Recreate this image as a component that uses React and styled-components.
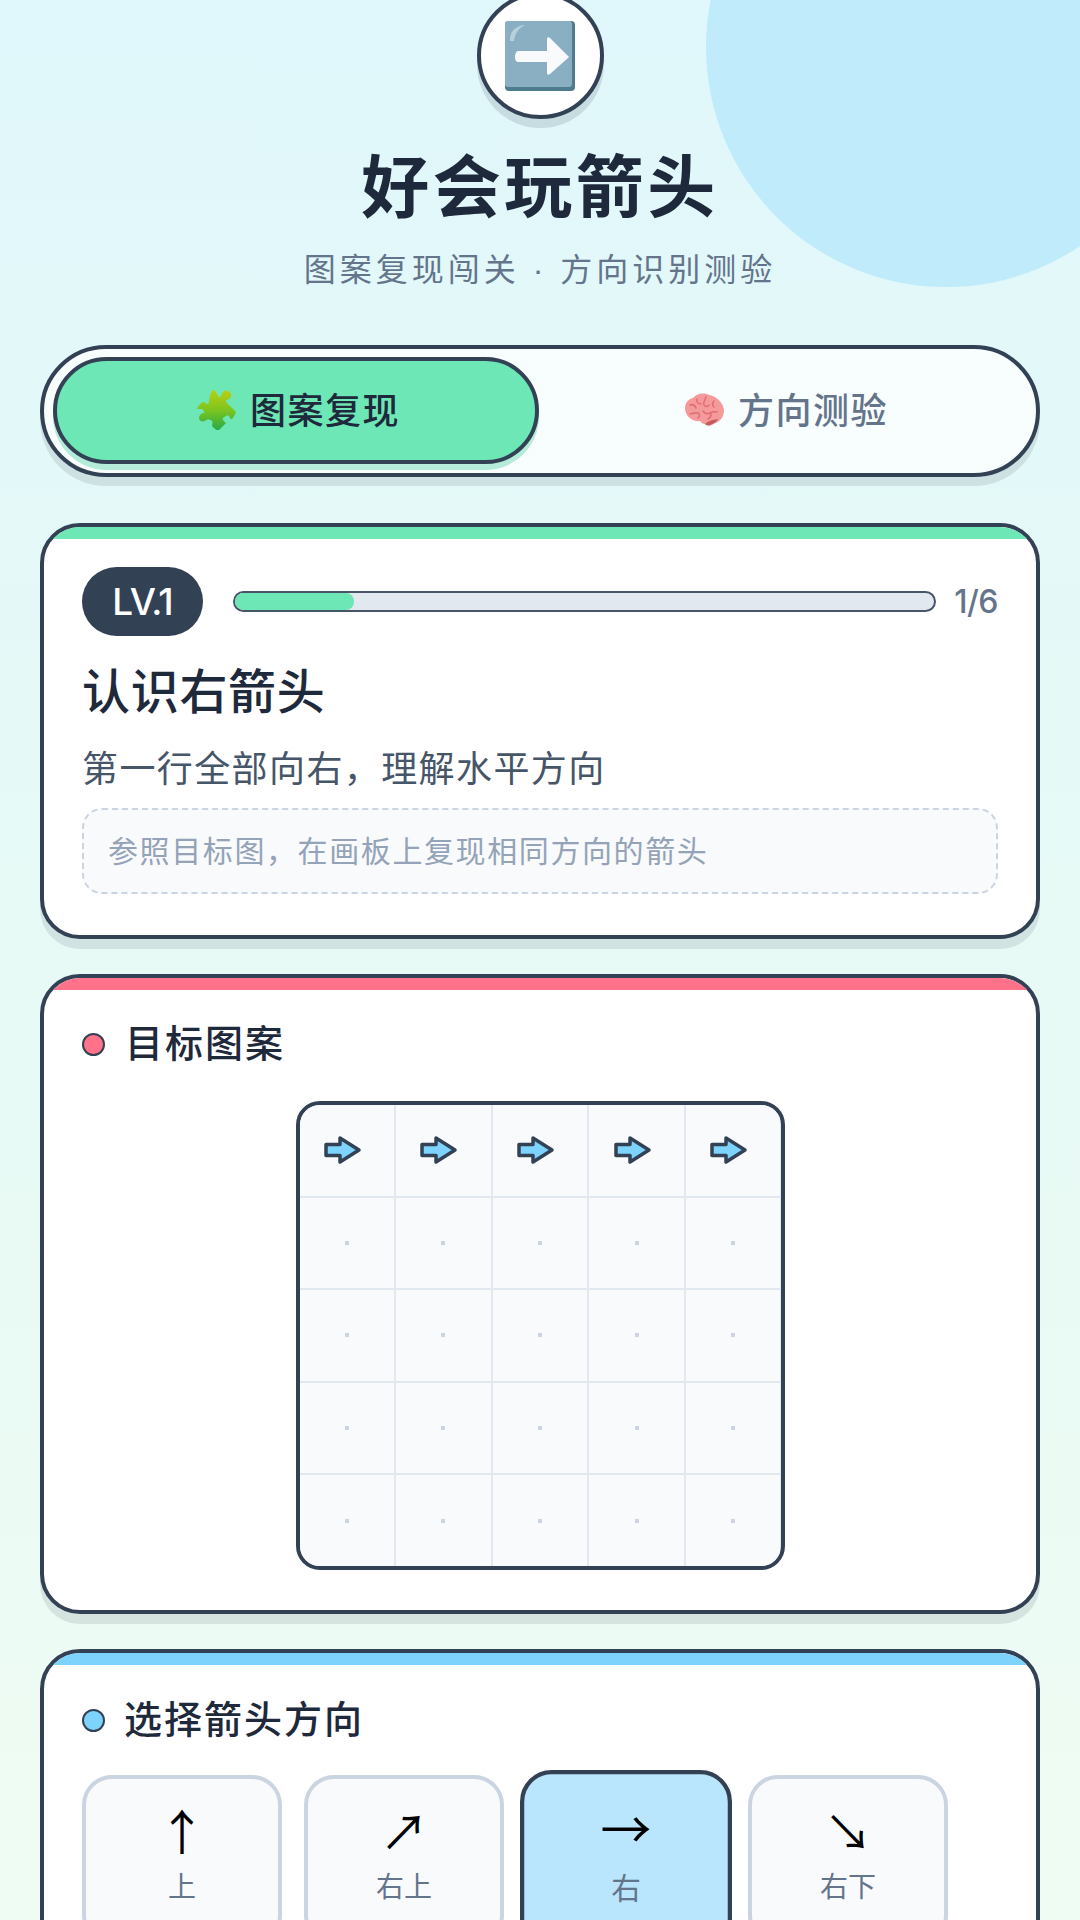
import React from 'react';
import styled, { createGlobalStyle } from 'styled-components';

const GlobalStyle = createGlobalStyle`
  html, body { margin: 0; padding: 0; }
  body { font-family: "Noto Sans CJK SC", "Noto Sans", sans-serif; color: #1e293b; }
  * { box-sizing: border-box; }
`;

const Page = styled.div`
  position: relative;
  width: 1080px;
  height: 1920px;
  overflow: hidden;
  padding: 0 40px;
  background: linear-gradient(180deg, #e0f7fb 0%, #e5f9f6 40%, #effcf3 100%);
`;

const Blob = styled.div`
  position: absolute;
  top: -193px;
  right: -106px;
  width: 480px;
  height: 480px;
  border-radius: 50%;
  background: #bfebfa;
`;

const Header = styled.header`
  position: relative;
  display: flex;
  flex-direction: column;
  align-items: center;
`;

const IconBadge = styled.div`
  width: 127px;
  height: 127px;
  margin-top: -8px;
  border: 4px solid #334155;
  border-radius: 50%;
  background: #fff;
  box-shadow: 0 9px 0 rgba(51, 65, 85, 0.15);
  display: flex;
  align-items: center;
  justify-content: center;
`;

const Title = styled.h1`
  margin: 24px 0 0;
  font-size: 68px;
  line-height: 80px;
  font-weight: 600;
  letter-spacing: 3.5px;
  color: #1e293b;
`;

const Subtitle = styled.p`
  margin: 22px 0 0;
  font-size: 32px;
  line-height: 44px;
  letter-spacing: 4px;
  color: #64748b;
`;

const Separator = styled.span`
  font-family: "Liberation Sans", sans-serif;
  line-height: 1;
`;

const Tabs = styled.div`
  position: relative;
  display: flex;
  gap: 2px;
  height: 132px;
  margin-top: 56px;
  padding: 8px 9px;
  border: 4px solid #334155;
  border-radius: 66px;
  background: rgba(255, 255, 255, 0.75);
  box-shadow: 0 9px 0 rgba(51, 65, 85, 0.12);
`;

const Tab = styled.div`
  flex: 1;
  height: 107px;
  padding: 0 0 5px 4px;
  display: flex;
  align-items: center;
  justify-content: center;
  gap: 14px;
  border-radius: 54px;
  border: 4px solid ${p => (p.$active ? '#334155' : 'transparent')};
  background: ${p => (p.$active ? '#6ee7b7' : 'transparent')};
  box-shadow: ${p => (p.$active ? '0 6px 0 #b5ecd9' : 'none')};
  color: ${p => (p.$active ? '#1e293b' : '#64748b')};
  font-size: 36px;
  font-weight: 500;
  letter-spacing: 1.5px;
`;

const TabIcon = styled.svg`
  margin-top: 3px;
`;

const Card = styled.section`
  position: relative;
  margin-top: ${p => p.$gap}px;
  border: 4px solid #334155;
  border-radius: 40px;
  background: #fff;
  box-shadow: 0 10px 0 rgba(51, 65, 85, 0.12);
  overflow: hidden;
`;

const Stripe = styled.div`
  height: 12px;
  background: ${p => p.$color};
`;

const CardBody = styled.div`
  padding: ${p => p.$top}px 38px ${p => p.$bottom}px;
`;

const LevelRow = styled.div`
  display: flex;
  align-items: center;
  gap: 30px;
`;

const Level = styled.div`
  width: 121px;
  height: 69px;
  border-radius: 35px;
  background: #334155;
  color: #fff;
  display: flex;
  align-items: center;
  justify-content: center;
  font-family: Inter, sans-serif;
  font-size: 37px;
  font-weight: 500;
  letter-spacing: -1px;
`;

const Progress = styled.div`
  flex: 1;
  height: 21px;
  border: 2.5px solid #475569;
  border-radius: 11px;
  background: #e2e8f0;
  overflow: hidden;
`;

const ProgressFill = styled.div`
  height: 100%;
  background: #6ee7b7;
  border-radius: 0 8px 8px 0;
`;

const Count = styled.div`
  margin-left: -12px;
  font-family: Inter, sans-serif;
  font-size: 32px;
  font-weight: 500;
  letter-spacing: -0.5px;
  color: #64748b;
`;

const LevelTitle = styled.h2`
  margin: 22px 0 0;
  font-size: 48px;
  line-height: 60px;
  font-weight: 500;
  letter-spacing: 0.7px;
  color: #1e293b;
`;

const LevelDesc = styled.p`
  margin: 24px 0 0;
  font-size: 36px;
  line-height: 48px;
  letter-spacing: 1.4px;
  color: #475569;
`;

const Hint = styled.div`
  margin-top: 18px;
  height: 86px;
  padding: 0 24px 4px;
  display: flex;
  align-items: center;
  border: 2px dashed #cbd5e1;
  border-radius: 20px;
  background: #f9fafc;
  font-size: 30px;
  letter-spacing: 1.6px;
  color: #94a3b8;
`;

const SectionHead = styled.div`
  display: flex;
  align-items: center;
  gap: ${p => p.$gap}px;
  font-size: 38px;
  line-height: 48px;
  font-weight: 500;
  letter-spacing: 2px;
  color: #1e293b;
`;

const Dot = styled.span`
  width: 23px;
  height: 23px;
  margin-top: 6px;
  border: 2.5px solid #334155;
  border-radius: 50%;
  background: ${p => p.$color};
`;

const Board = styled.div`
  display: grid;
  grid-template-columns: repeat(5, 1fr);
  grid-template-rows: repeat(5, 1fr);
  gap: 2px;
  width: 489px;
  height: 469px;
  margin: 36px auto 0;
  border: 4px solid #334155;
  border-radius: 24px;
  background: #e2e8f0;
  overflow: hidden;
`;

const Cell = styled.div`
  display: flex;
  align-items: center;
  justify-content: center;
  background: #f9fafc;
`;

const EmptyMark = styled.span`
  width: 4px;
  height: 4px;
  background: #cbd5e1;
`;

const ArrowMark = styled.svg`
  width: 41px;
  height: 32px;
  margin-left: -9px;
`;

const DirRow = styled.div`
  display: flex;
  gap: 22px;
  margin-top: 34px;
`;

const DirButton = styled.div`
  width: 200px;
  height: 170px;
  padding-top: 19px;
  display: flex;
  flex-direction: column;
  align-items: center;
  border: 4px solid ${p => (p.$active ? '#334155' : '#cbd5e1')};
  border-radius: 30px;
  background: ${p => (p.$active ? '#bae6fd' : '#f9fafc')};
  transform: ${p => (p.$active ? 'scale(1.06)' : 'none')};
`;

const DirGlyph = styled.span`
  font-family: "Noto Sans CJK SC", sans-serif;
  font-size: 48px;
  line-height: 62px;
  color: #000;
`;

const DirLabel = styled.span`
  margin-top: 6px;
  font-size: 28px;
  line-height: 38px;
  color: #64748b;
`;

const KeyIcon = () => (
  <svg width="70" height="70" viewBox="0 0 70 70">
    <rect width="70" height="70" rx="4" fill="#4e7c8f" />
    <path d="M3 0h61a3 3 0 0 1 3 3v60a3 3 0 0 1-3 3H3a3 3 0 0 1-3-3V3a3 3 0 0 1 3-3z" fill="#8aafc2" />
    <path d="M5 20C5 11 9 5 20 4c-6 3-10 8-11 16z" fill="#b7d1dc" />
    <path d="M13 30h29v-12c0-2 2-2 3-1l18 18c1 1 1 1 0 2L45 53c-1 1-3 1-3-1V41H13c-1 0-3-1-3-5s2-6 3-6z" fill="#f8fafc" />
  </svg>
);

const PuzzleIcon = () => (
  <TabIcon width="40" height="40" viewBox="0 0 40 40">
    <defs>
      <linearGradient id="puzzleFill" x1="0" y1="0" x2="0" y2="1">
        <stop offset="0" stopColor="#b9cf14" />
        <stop offset="0.5" stopColor="#7cc41f" />
        <stop offset="1" stopColor="#22a94b" />
      </linearGradient>
    </defs>
    <path
      d="M17 0c2 0 3 2 4 4 1 2 2 3 3 3s1-2 2-4c1-2 4-3 6-2 3 1 4 4 3 6-1 2-3 3-5 3-1 1 0 2 2 4l8 8c-1 3-3 6-4 7-1 1-2-1-3-3-1-1-2-1-3 0l-3 2c-1 1 1 3 3 5l-8 8c-2-1-4-3-6-5 0-2 1-4 0-5-2-2-5-2-7 0-3 1-6 0-6-3s3-5 5-5c1 0 0-2-2-4L1 19c1-3 4-6 6-7 2 0 3 2 4 2s2-1 2-2c0-3 2-11 4-12z"
      fill="url(#puzzleFill)"
    />
  </TabIcon>
);

const BrainIcon = () => (
  <TabIcon width="40" height="34" viewBox="0 0 40 34">
    <path d="M2 20C-1 13 3 6 9 5c3-4 10-6 16-3 7 1 14 7 15 15 0 7-4 12-9 13-3 3-7 3-10 1-2 0-4-1-5-3-6 1-12-3-14-8z" fill="#f49a9a" />
    <path d="M21 31c3-3 7-4 13-5-2 3-3 4-6 5-3 2-5 2-7 0z" fill="#c75b5b" />
    <path d="M6 12c3-1 5 0 6 3M13 6c-1 3 1 5 4 5M22 4c-1 3-3 5-2 8 1 2 4 2 5 0M30 8c-2 2-2 4 0 6M6 21c3 0 5-2 8-1 2 1 2 4 0 5M19 18c2 3 5 3 7 2 2-1 4-2 7-1M24 26c2-1 3-3 3-5" fill="none" stroke="#e06c75" strokeWidth="1.5" strokeLinecap="round" />
  </TabIcon>
);

const RightArrow = () => (
  <ArrowMark viewBox="0 0 41 32">
    <path d="M4 10.5h14V4l19 12-19 12v-6.500H4z" fill="#7dd3fc" stroke="#334155" strokeWidth="3.5" strokeLinejoin="round" />
  </ArrowMark>
);

const directions = [
  { glyph: '↑', label: '上' },
  { glyph: '↗', label: '右上' },
  { glyph: '→', label: '右', active: true },
  { glyph: '↘', label: '右下' },
];

const cells = Array.from({ length: 25 }, (_, i) => i);

export default function App() {
  return (
    <Page>
      <GlobalStyle />
      <Blob />
      <Header>
        <IconBadge><KeyIcon /></IconBadge>
        <Title>好会玩箭头</Title>
        <Subtitle>图案复现闯关<Separator> · </Separator>方向识别测验</Subtitle>
      </Header>

      <Tabs>
        <Tab $active><PuzzleIcon />图案复现</Tab>
        <Tab><BrainIcon />方向测验</Tab>
      </Tabs>

      <Card $gap={46}>
        <Stripe $color="#6ee7b7" />
        <CardBody $top={28} $bottom={41}>
          <LevelRow>
            <Level>LV.1</Level>
            <Progress><ProgressFill style={{ width: '17%' }} /></Progress>
            <Count>1/6</Count>
          </LevelRow>
          <LevelTitle>认识右箭头</LevelTitle>
          <LevelDesc>第一行全部向右，理解水平方向</LevelDesc>
          <Hint>参照目标图，在画板上复现相同方向的箭头</Hint>
        </CardBody>
      </Card>

      <Card $gap={35}>
        <Stripe $color="#ff7289" />
        <CardBody $top={27} $bottom={40}>
          <SectionHead $gap={20}><Dot $color="#ff7289" />目标图案</SectionHead>
          <Board>
            {cells.map(i => (
              <Cell key={i}>{i < 5 ? <RightArrow /> : <EmptyMark />}</Cell>
            ))}
          </Board>
        </CardBody>
      </Card>

      <Card $gap={35}>
        <Stripe $color="#7dd3fc" />
        <CardBody $top={28} $bottom={40}>
          <SectionHead $gap={19}><Dot $color="#7dd3fc" />选择箭头方向</SectionHead>
          <DirRow>
            {directions.map(d => (
              <DirButton key={d.label} $active={d.active}>
                <DirGlyph>{d.glyph}</DirGlyph>
                <DirLabel>{d.label}</DirLabel>
              </DirButton>
            ))}
          </DirRow>
        </CardBody>
      </Card>
    </Page>
  );
}
